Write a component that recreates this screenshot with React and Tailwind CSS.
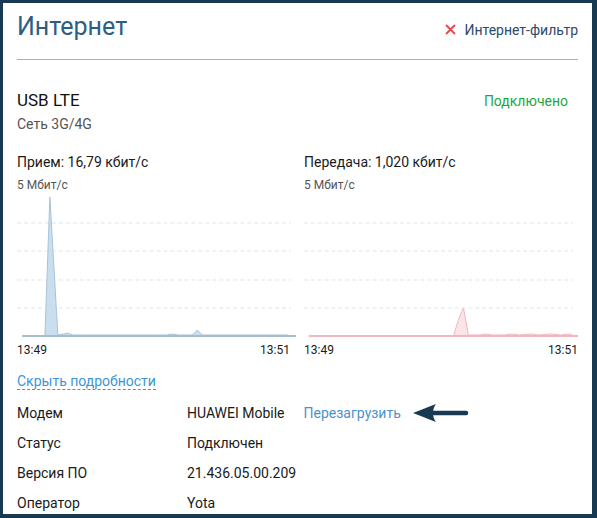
function Chart({ kind }) {
  const rx = kind === "rx";
  const fill = rx ? "#c9dff0" : "#fbe4e7";
  const stroke = rx ? "#a8c3d8" : "#f0b6bf";
  const base = rx ? "#a7bccd" : "#efb7c0";
  const area = rx
    ? "M5 144 L28 144 L33 5 L41 143 L47 142 L51 141 L56 143 L150 143 L156 142 L162 143 L176 143 L181 138 L186 143 L272 143 L272 144 Z"
    : "M5 144 L153 144 C156 132 159 124 163 116 L168 143 L180 143 L186 142 L192 143 L205 143 L212 142 L220 143 L232 142 L240 143 L252 142 L262 143 L272 142 L276 144 Z";
  return (
    <svg viewBox="0 0 280 146" className="w-full h-[146px] block" preserveAspectRatio="none">
      {[31, 59, 88, 116].map((y) => (
        <line key={y} x1="0" x2="275" y1={y} y2={y} stroke="#d9e8f2" strokeWidth="1" strokeDasharray="4 3" />
      ))}
      <path d={area} fill={fill} stroke={stroke} strokeWidth="1" />
      <line x1="5" x2="280" y1="144" y2="144" stroke={base} strokeWidth="2" />
    </svg>
  );
}

function Column({ title, kind, className }) {
  return (
    <div className={"flex flex-col " + className}>
      <div className="text-[14px] leading-[20px] text-[#1a1a1a]">{title}</div>
      <div className="mt-[6px] text-[12px] leading-[14px] text-[#555]">5 Мбит/с</div>
      <Chart kind={kind} />
      <div className="mt-[4px] flex justify-between text-[12px] leading-[16px] text-[#1a1a1a]">
        <span>13:49</span>
        <span>13:51</span>
      </div>
    </div>
  );
}

function Row({ label, children }) {
  return (
    <div className="flex h-[30px] items-center text-[14px] text-[#1a1a1a]">
      <div className="w-[170px]">{label}</div>
      <div className="flex items-center">{children}</div>
    </div>
  );
}

function App() {
  return (
    <div
      className="w-[597px] h-[518px] overflow-hidden bg-white border-solid border-[#173a52] border-t-[3px] border-l-[3px] border-r-[5px] border-b-[4px] px-[14px]"
      style={{ fontFamily: "Roboto, 'Noto Sans', sans-serif" }}
    >
      {/* header */}
      <div className="flex justify-between items-baseline pt-[9px] pb-[17px] border-b border-[#88bcdf]">
        <div className="text-[25px] leading-[30px] text-[#2d5e82]">Интернет</div>
        <div className="flex items-center gap-[8px] text-[14px] leading-[20px] text-[#2b4a6a]">
          <svg width="11" height="11" viewBox="0 0 11 11">
            <path d="M1 1 L10 10 M10 1 L1 10" stroke="#e8474b" strokeWidth="1.8" />
          </svg>
          <span>Интернет-фильтр</span>
        </div>
      </div>

      {/* modem */}
      <div className="flex justify-between mt-[30px]">
        <div className="flex flex-col">
          <div className="text-[17px] leading-[20px] text-[#111]">USB LTE</div>
          <div className="mt-[4px] text-[14px] leading-[20px] text-[#555]">Сеть 3G/4G</div>
        </div>
        <div className="text-[14px] leading-[20px] text-[#22a63f] pr-[10px] pt-[1px]">Подключено</div>
      </div>

      {/* charts */}
      <div className="flex justify-between mt-[18px]">
        <Column title="Прием: 16,79 кбит/с" kind="rx" className="w-[279px] [&>div:last-child]:pr-[6px]" />
        <Column title="Передача: 1,020 кбит/с" kind="tx" className="w-[274px]" />
      </div>

      <div className="mt-[13px] text-[14px] leading-[20px]">
        <span className="text-[#3d95d6] border-b border-dashed border-[#3d95d6]">Скрыть подробности</span>
      </div>

      <div className="mt-[7px] flex flex-col">
        <Row label="Модем">
          <span>HUAWEI Mobile</span>
          <span className="ml-[19px] text-[#4a93cc]">Перезагрузить</span>
          <svg className="ml-[12px]" width="56" height="20" viewBox="0 0 56 20">
            <path d="M0 10 C8 7 15 4 23 1 C19 6 19 14 23 19 C15 16 8 13 0 10 Z" fill="#173a52" />
            <path d="M16 10 L53 10" stroke="#173a52" strokeWidth="4.5" strokeLinecap="round" />
          </svg>
        </Row>
        <Row label="Статус">Подключен</Row>
        <Row label="Версия ПО">21.436.05.00.209</Row>
        <Row label="Оператор">Yota</Row>
      </div>
    </div>
  );
}

export default App;
